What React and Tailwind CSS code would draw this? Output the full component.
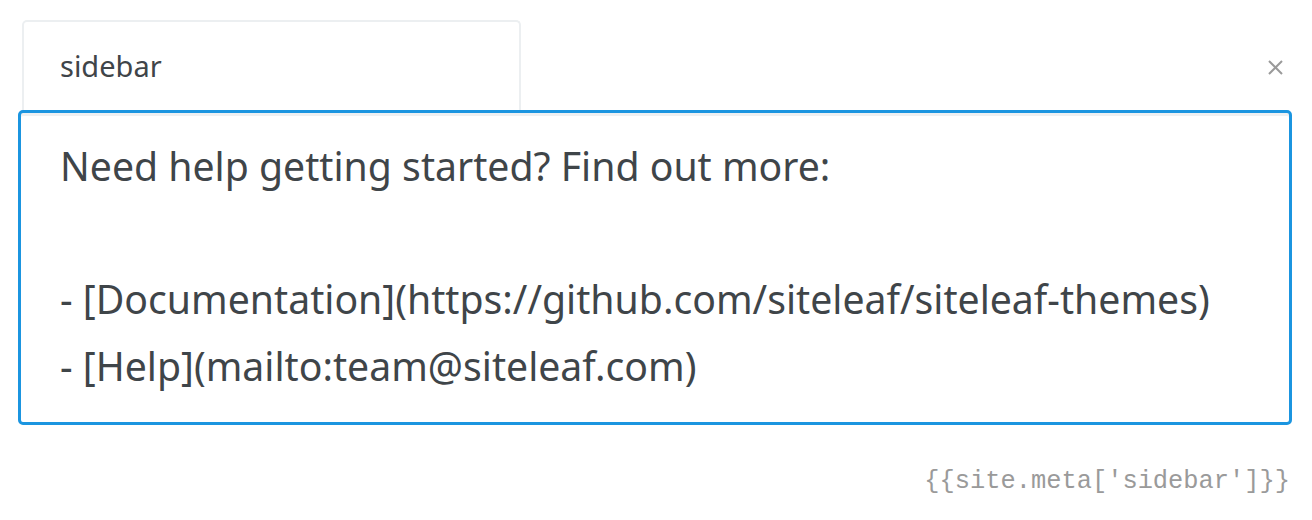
import React from "react";

export default function App() {
  const sans = { fontFamily: '"Source Sans Pro", "Noto Sans", "Open Sans", sans-serif' };
  return (
    <div className="w-[1312px] h-[520px] bg-white pl-[18px] pr-[20px] pt-[20px]" style={sans}>
      <div className="flex items-start justify-between">
        <div className="ml-[4px] w-[499px] h-[95px] -mb-[5px] border-2 border-b-0 border-[#eceff1] rounded-t-[5px] pl-[36px] pt-[24px] text-[29px] leading-[40px] text-[#3f4549]">
          sidebar
        </div>
        <div className="mt-[40px] mr-[9px] text-[#9a9a9a]">
          <svg width="15" height="15" viewBox="0 0 15 15" stroke="currentColor" strokeWidth="2" fill="none">
            <path d="M1 1 L14 14 M14 1 L1 14" />
          </svg>
        </div>
      </div>
      <div className="relative h-[315px] border-[3px] border-[#1b95e0] rounded-[5px] bg-white shadow-[inset_0_3px_0_#eef0f2] pl-[39px] pt-[20px] text-[39.2px] leading-[66.7px] text-[#3f4549]">
        <div>Need help getting started? Find out more:</div>
        <div>&nbsp;</div>
        <div>- [Documentation](https://github.com/siteleaf/siteleaf-themes)</div>
        <div>- [Help](mailto:team@siteleaf.com)</div>
      </div>
      <div className="flex justify-end pr-[2px] mt-[42px]">
        <span className="text-[25.4px] leading-[30px] text-[#9a9a9a]" style={{ fontFamily: '"Liberation Mono", "DejaVu Sans Mono", monospace' }}>
          {"{{site.meta['sidebar']}}"}
        </span>
      </div>
    </div>
  );
}
